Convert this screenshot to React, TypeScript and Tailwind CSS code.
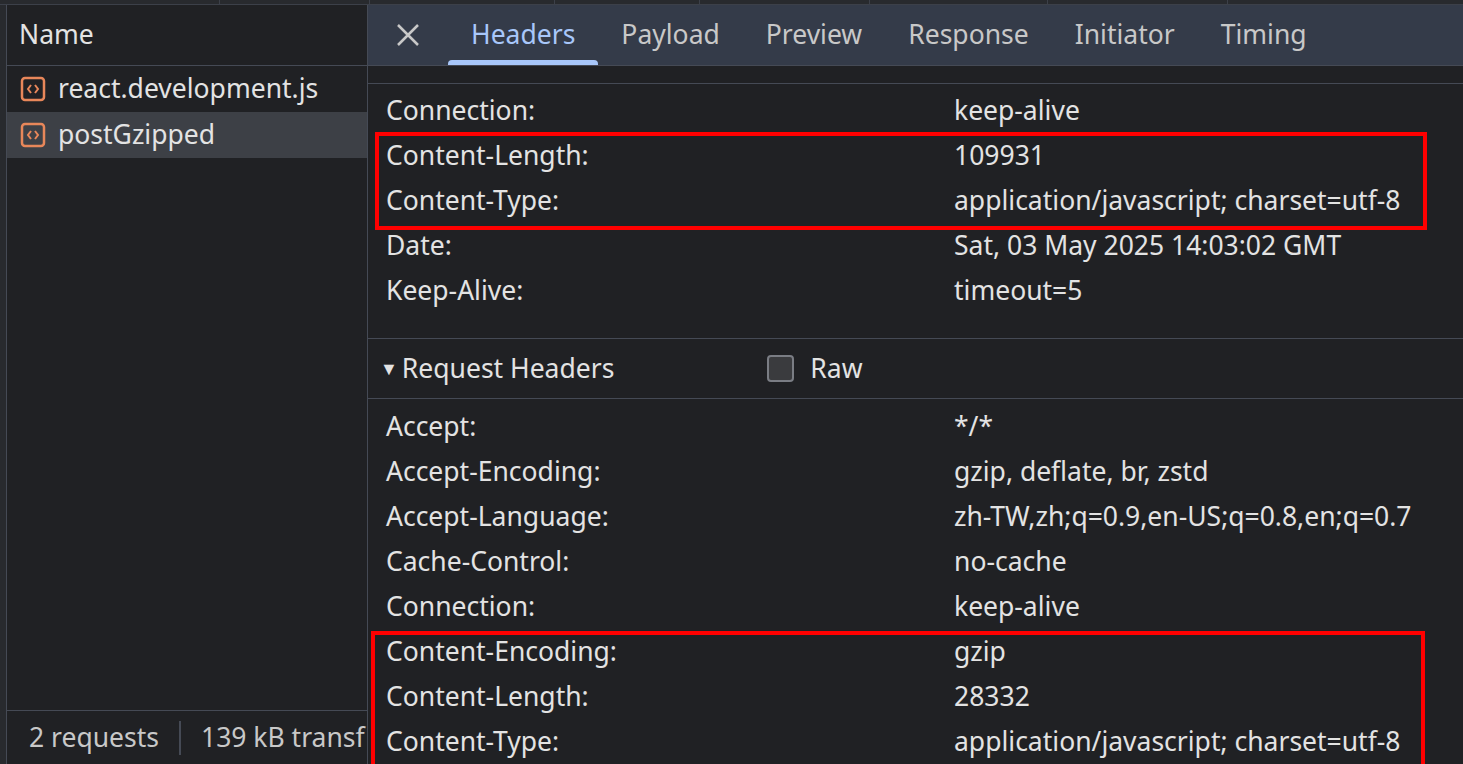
const F = { fontFamily: '"Noto Sans", "Open Sans", sans-serif' };

function Icon() {
  return (
    <svg width="26" height="26" viewBox="0 0 26 26" className="shrink-0">
      <rect x="2" y="2" width="22" height="22" rx="3" fill="none" stroke="#e8875a" strokeWidth="2.5" />
      <path d="M11 9 L8 13 L11 17 M15 9 L18 13 L15 17" fill="none" stroke="#e8875a" strokeWidth="2" />
    </svg>
  );
}

function Row({ k, v }: { k: string; v: string }) {
  return (
    <div className="flex h-[45px] items-center">
      <div className="w-[586px] pl-[18px] shrink-0">{k}</div>
      <div className="whitespace-nowrap">{v}</div>
    </div>
  );
}

export default function App() {
  const tabs = ['Headers', 'Payload', 'Preview', 'Response', 'Initiator', 'Timing'];
  return (
    <div style={F} className="w-[1463px] h-[764px] overflow-hidden bg-[#202124] text-[#e3e3e3] text-[26.5px] flex flex-col">
      <div className="h-[5px] bg-[#282a2e] border-b border-[#3c4049] flex shrink-0">
        {[220, 150, 185, 145, 170, 178, 180].map((w, i) => (
          <div key={i} style={{ width: w }} className="border-r border-[#3c4049]" />
        ))}
      </div>
      <div className="flex flex-1 min-h-0">
        <div className="w-[7px] bg-[#282a2e] border-r border-[#454a55]" />
        <div className="w-[361px] shrink-0 flex flex-col border-r border-[#454a55]">
          <div className="h-[61px] flex items-center pl-[12px] border-b border-[#454a55]">Name</div>
          <div className="h-[46px] flex items-center gap-[12px] pl-[13px]"><Icon />react.development.js</div>
          <div className="h-[46px] flex items-center gap-[12px] pl-[13px] bg-[#3d4046]"><Icon />postGzipped</div>
          <div className="flex-1" />
          <div className="h-[54px] border-t border-[#454a55] flex items-center pl-[22px] whitespace-nowrap overflow-hidden text-[#c8c8c8]">
            2 requests<span className="mx-[20px] w-[2px] h-[34px] bg-[#454a55] shrink-0" />139 kB transf
          </div>
        </div>
        <div className="flex-1 flex flex-col min-w-0">
          <div className="h-[61px] bg-[#343b49] flex items-end border-b border-[#454a55] shrink-0">
            <div className="w-[80px] h-full flex items-center justify-center">
              <svg width="26" height="26" viewBox="0 0 26 26"><path d="M3 3 L23 23 M23 3 L3 23" stroke="#c8c8c8" strokeWidth="2.5" /></svg>
            </div>
            {tabs.map((t, i) => (
              <div key={t} className={`h-full flex items-center px-[23px] relative ${i === 0 ? 'text-[#a8c7fa]' : 'text-[#c8c8c8]'}`}>
                {t}
                {i === 0 && <div className="absolute bottom-0 left-0 right-0 h-[5px] rounded-t bg-[#a8c7fa]" />}
              </div>
            ))}
          </div>
          <div className="h-[18px] border-b border-[#454a55] shrink-0" />
          <div className="pt-[4px] pb-[25px] relative">
            <Row k="Connection:" v="keep-alive" />
            <Row k="Content-Length:" v="109931" />
            <Row k="Content-Type:" v="application/javascript; charset=utf-8" />
            <Row k="Date:" v="Sat, 03 May 2025 14:03:02 GMT" />
            <Row k="Keep-Alive:" v="timeout=5" />
            <div className="absolute left-[7px] top-[48px] w-[1052px] h-[98px] border-[4px] border-[#ff0000]" />
          </div>
          <div className="h-[61px] border-y border-[#454a55] flex items-center pl-[12px] shrink-0">
            <span className="text-[18px] mr-[4px]">▼</span>Request Headers
            <span className="ml-[153px] w-[27px] h-[27px] rounded-[4px] border-2 border-[#7a7d84] bg-[#3a3b3e]" />
            <span className="ml-[16px]">Raw</span>
          </div>
          <div className="pt-[5px] relative">
            <Row k="Accept:" v="*/*" />
            <Row k="Accept-Encoding:" v="gzip, deflate, br, zstd" />
            <Row k="Accept-Language:" v="zh-TW,zh;q=0.9,en-US;q=0.8,en;q=0.7" />
            <Row k="Cache-Control:" v="no-cache" />
            <Row k="Connection:" v="keep-alive" />
            <Row k="Content-Encoding:" v="gzip" />
            <Row k="Content-Length:" v="28332" />
            <Row k="Content-Type:" v="application/javascript; charset=utf-8" />
            <div className="absolute left-[3px] top-[232px] w-[1054px] h-[140px] border-[4px] border-[#ff0000]" />
          </div>
        </div>
      </div>
    </div>
  );
}
